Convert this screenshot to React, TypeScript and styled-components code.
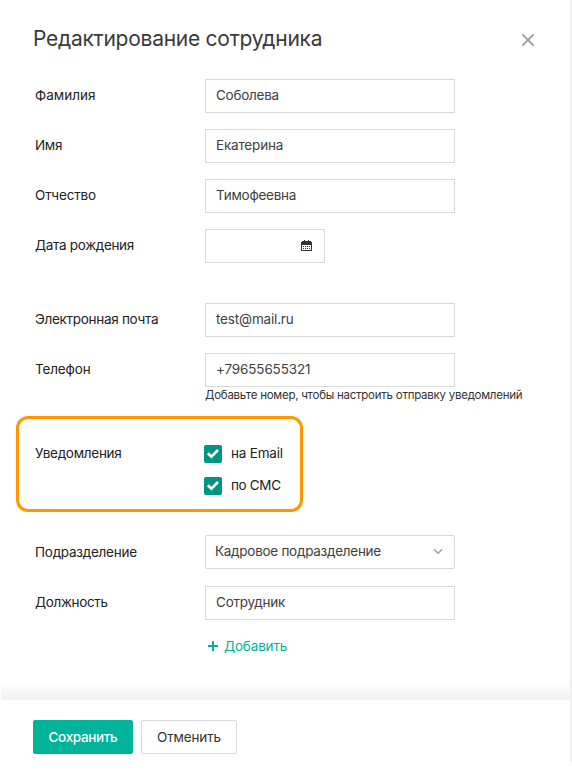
import React from "react";
import styled, { createGlobalStyle } from "styled-components";

const GlobalStyle = createGlobalStyle`
  * { box-sizing: border-box; }
  body { margin: 0; background: #fff; }
`;

const Page = styled.div`
  width: 572px;
  height: 774px;
  background: #fff;
  overflow: hidden;
  font-family: Inter, "Noto Sans", sans-serif;
  font-size: 13.5px;
  line-height: 20px;
  color: #222;
`;

const Panel = styled.main`
  height: 762px;
  display: flex;
  flex-direction: column;
  border-right: 2px solid #f0f0f0;
`;

const Header = styled.header`
  height: 79px;
  padding: 0 35px 2px 33px;
  display: flex;
  align-items: center;
  justify-content: space-between;
  flex-shrink: 0;
`;

const Title = styled.h1`
  margin: 0;
  font-size: 21px;
  font-weight: 400;
  line-height: 28px;
  color: #3a3a3a;
  white-space: nowrap;
  letter-spacing: -0.26px;
`;

const CloseButton = styled.button`
  width: 14px;
  height: 14px;
  padding: 0;
  margin-top: 2px;
  border: 0;
  background: none;
  display: flex;
`;

const Form = styled.form`
  flex: 1;
  min-height: 0;
`;

const Row = styled.div<{ $gap?: number }>`
  display: grid;
  grid-template-columns: 170px 1fr;
  align-items: start;
  padding-left: 35px;
  margin-bottom: ${(p) => p.$gap ?? 16}px;
`;

const Text = styled.span<{ $track?: number }>`
  white-space: nowrap;
  letter-spacing: ${(p) => p.$track ?? 0}px;
`;

const Label = styled(Text)<{ $top?: number }>`
  padding-top: ${(p) => p.$top ?? 6}px;
`;

const Field = styled.div<{ $width?: number; $select?: boolean }>`
  width: ${(p) => p.$width ?? 250}px;
  height: 34px;
  padding: ${(p) => (p.$select ? "0 11px 2px 9px" : "0 12px 2px 10px")};
  border: 1px solid #d9d9d9;
  border-radius: ${(p) => (p.$select ? 2 : 0)}px;
  display: flex;
  align-items: center;
  color: #404040;
`;

const FieldIcon = styled.svg`
  margin-left: auto;
  flex-shrink: 0;
`;

const Hint = styled(Text)`
  display: block;
  height: 13px;
  font-size: 11.5px;
  line-height: 17px;
  color: #333;
`;

const Highlight = styled.section`
  width: 287px;
  height: 96px;
  margin: 0 0 23px 16px;
  padding: 24px 0 0 16px;
  border: 3px solid #ff9800;
  border-radius: 12px;
  display: grid;
  grid-template-columns: 169px 1fr;
`;

const Options = styled.div`
  display: flex;
  flex-direction: column;
  gap: 12px;
`;

const Option = styled.label`
  height: 20px;
  display: flex;
  align-items: center;
  gap: 9px;
`;

const Box = styled.span`
  width: 18px;
  height: 18px;
  margin-top: 2px;
  border-radius: 2px;
  background: #009580;
  display: flex;
  flex-shrink: 0;
`;

const AddLink = styled.a`
  display: flex;
  align-items: center;
  gap: 6px;
  margin-left: 208px;
  height: 20px;
  color: #00b39b;
`;

const FooterShade = styled.div`
  height: 20px;
  flex-shrink: 0;
  margin-left: 1px;
  background: linear-gradient(#fff, #fafafa 45%, #f1f1f1);
`;

const Footer = styled.footer`
  height: 62px;
  flex-shrink: 0;
  padding: 20px 0 0 33px;
  display: flex;
  gap: 8px;
`;

const Button = styled.button<{ $primary?: boolean }>`
  width: ${(p) => (p.$primary ? 100 : 96)}px;
  height: 34px;
  padding: 0 0 1px;
  border: 1px solid ${(p) => (p.$primary ? "#00b39b" : "#d9d9d9")};
  border-radius: 2px;
  background: ${(p) => (p.$primary ? "#00b39b" : "#fff")};
  color: ${(p) => (p.$primary ? "#fff" : "#333")};
  font: ${(p) => (p.$primary ? 500 : 400)} 13.5px/20px Inter, "Noto Sans", sans-serif;
`;

function Checkbox({ text, track }: { text: string; track: number }) {
  return (
    <Option>
      <Box>
        <svg width="18" height="18" viewBox="0 0 18 18" fill="none">
          <path d="M3.8 8.2 7.4 11.6 14 5" stroke="#fff" strokeWidth="2.7" />
        </svg>
      </Box>
      <Text $track={track}>{text}</Text>
    </Option>
  );
}

interface TextRow {
  label: string;
  value: string;
  labelTrack: number;
  valueTrack: number;
}

const names: TextRow[] = [
  { label: "Фамилия", value: "Соболева", labelTrack: 0, valueTrack: -0.25 },
  { label: "Имя", value: "Екатерина", labelTrack: -0.3, valueTrack: -0.18 },
  { label: "Отчество", value: "Тимофеевна", labelTrack: -0.15, valueTrack: -0.25 },
];

const email: TextRow = {
  label: "Электронная почта",
  value: "test@mail.ru",
  labelTrack: -0.3,
  valueTrack: -0.17,
};

const phone: TextRow = {
  label: "Телефон",
  value: "+79655655321",
  labelTrack: -0.15,
  valueTrack: -0.15,
};

const position: TextRow = {
  label: "Должность",
  value: "Сотрудник",
  labelTrack: -0.33,
  valueTrack: -0.23,
};

function InputRow({ row, gap }: { row: TextRow; gap?: number }) {
  return (
    <Row $gap={gap}>
      <Label $track={row.labelTrack}>{row.label}</Label>
      <Field>
        <Text $track={row.valueTrack}>{row.value}</Text>
      </Field>
    </Row>
  );
}

export default function App() {
  return (
    <Page>
      <GlobalStyle />
      <Panel>
        <Header>
          <Title>Редактирование сотрудника</Title>
          <CloseButton aria-label="Закрыть">
            <svg width="14" height="14" viewBox="0 0 14 14">
              <path d="M1.3 1.3 12.7 12.7M12.7 1.3 1.3 12.7" stroke="#999" strokeWidth="1.7" />
            </svg>
          </CloseButton>
        </Header>
        <Form>
          {names.map((row) => (
            <InputRow key={row.label} row={row} />
          ))}
          <Row $gap={40}>
            <Label $track={-0.32}>Дата рождения</Label>
            <Field $width={120}>
              <FieldIcon width="11" height="11" viewBox="0 0 11 11" shapeRendering="crispEdges">
                <path
                  fill="#333"
                  fillRule="evenodd"
                  d="M0 2h1V1h2V0h1v1h3V0h1v1h2v1h1v9H0zM1 5v5h9V5z"
                />
                <path fill="#333" d="M2 6h1v1H2zM4 6h1v1H4zM6 6h1v1H6zM8 6h1v1H8zM2 8h1v1H2zM4 8h1v1H4zM6 8h1v1H6zM8 8h1v1H8z" />
              </FieldIcon>
            </Field>
          </Row>
          <InputRow row={email} />
          <InputRow row={phone} gap={0} />
          <Row>
            <span />
            <Hint $track={-0.25}>Добавьте номер, чтобы настроить отправку уведомлений</Hint>
          </Row>
          <Highlight>
            <Text $track={-0.27}>Уведомления</Text>
            <Options>
              <Checkbox text="на Email" track={-0.2} />
              <Checkbox text="по СМС" track={-0.35} />
            </Options>
          </Highlight>
          <Row $gap={17}>
            <Label $track={-0.25} $top={7}>Подразделение</Label>
            <Field $select>
              <Text $track={-0.27}>Кадровое подразделение</Text>
              <FieldIcon width="10" height="7" viewBox="0 0 10 7" fill="none">
                <path d="M1 1.2 5 5.2 9 1.2" stroke="#a0a0a0" strokeWidth="1.6" />
              </FieldIcon>
            </Field>
          </Row>
          <InputRow row={position} />
          <AddLink>
            <svg width="10" height="10" viewBox="0 0 10 10" shapeRendering="crispEdges">
              <path d="M4 0h2v4h4v2H6v4H4V6H0V4h4z" fill="#00b39b" />
            </svg>
            <Text $track={-0.15}>Добавить</Text>
          </AddLink>
        </Form>
        <FooterShade />
        <Footer>
          <Button $primary>
            <Text $track={-0.35}>Сохранить</Text>
          </Button>
          <Button>
            <Text $track={-0.15}>Отменить</Text>
          </Button>
        </Footer>
      </Panel>
    </Page>
  );
}
